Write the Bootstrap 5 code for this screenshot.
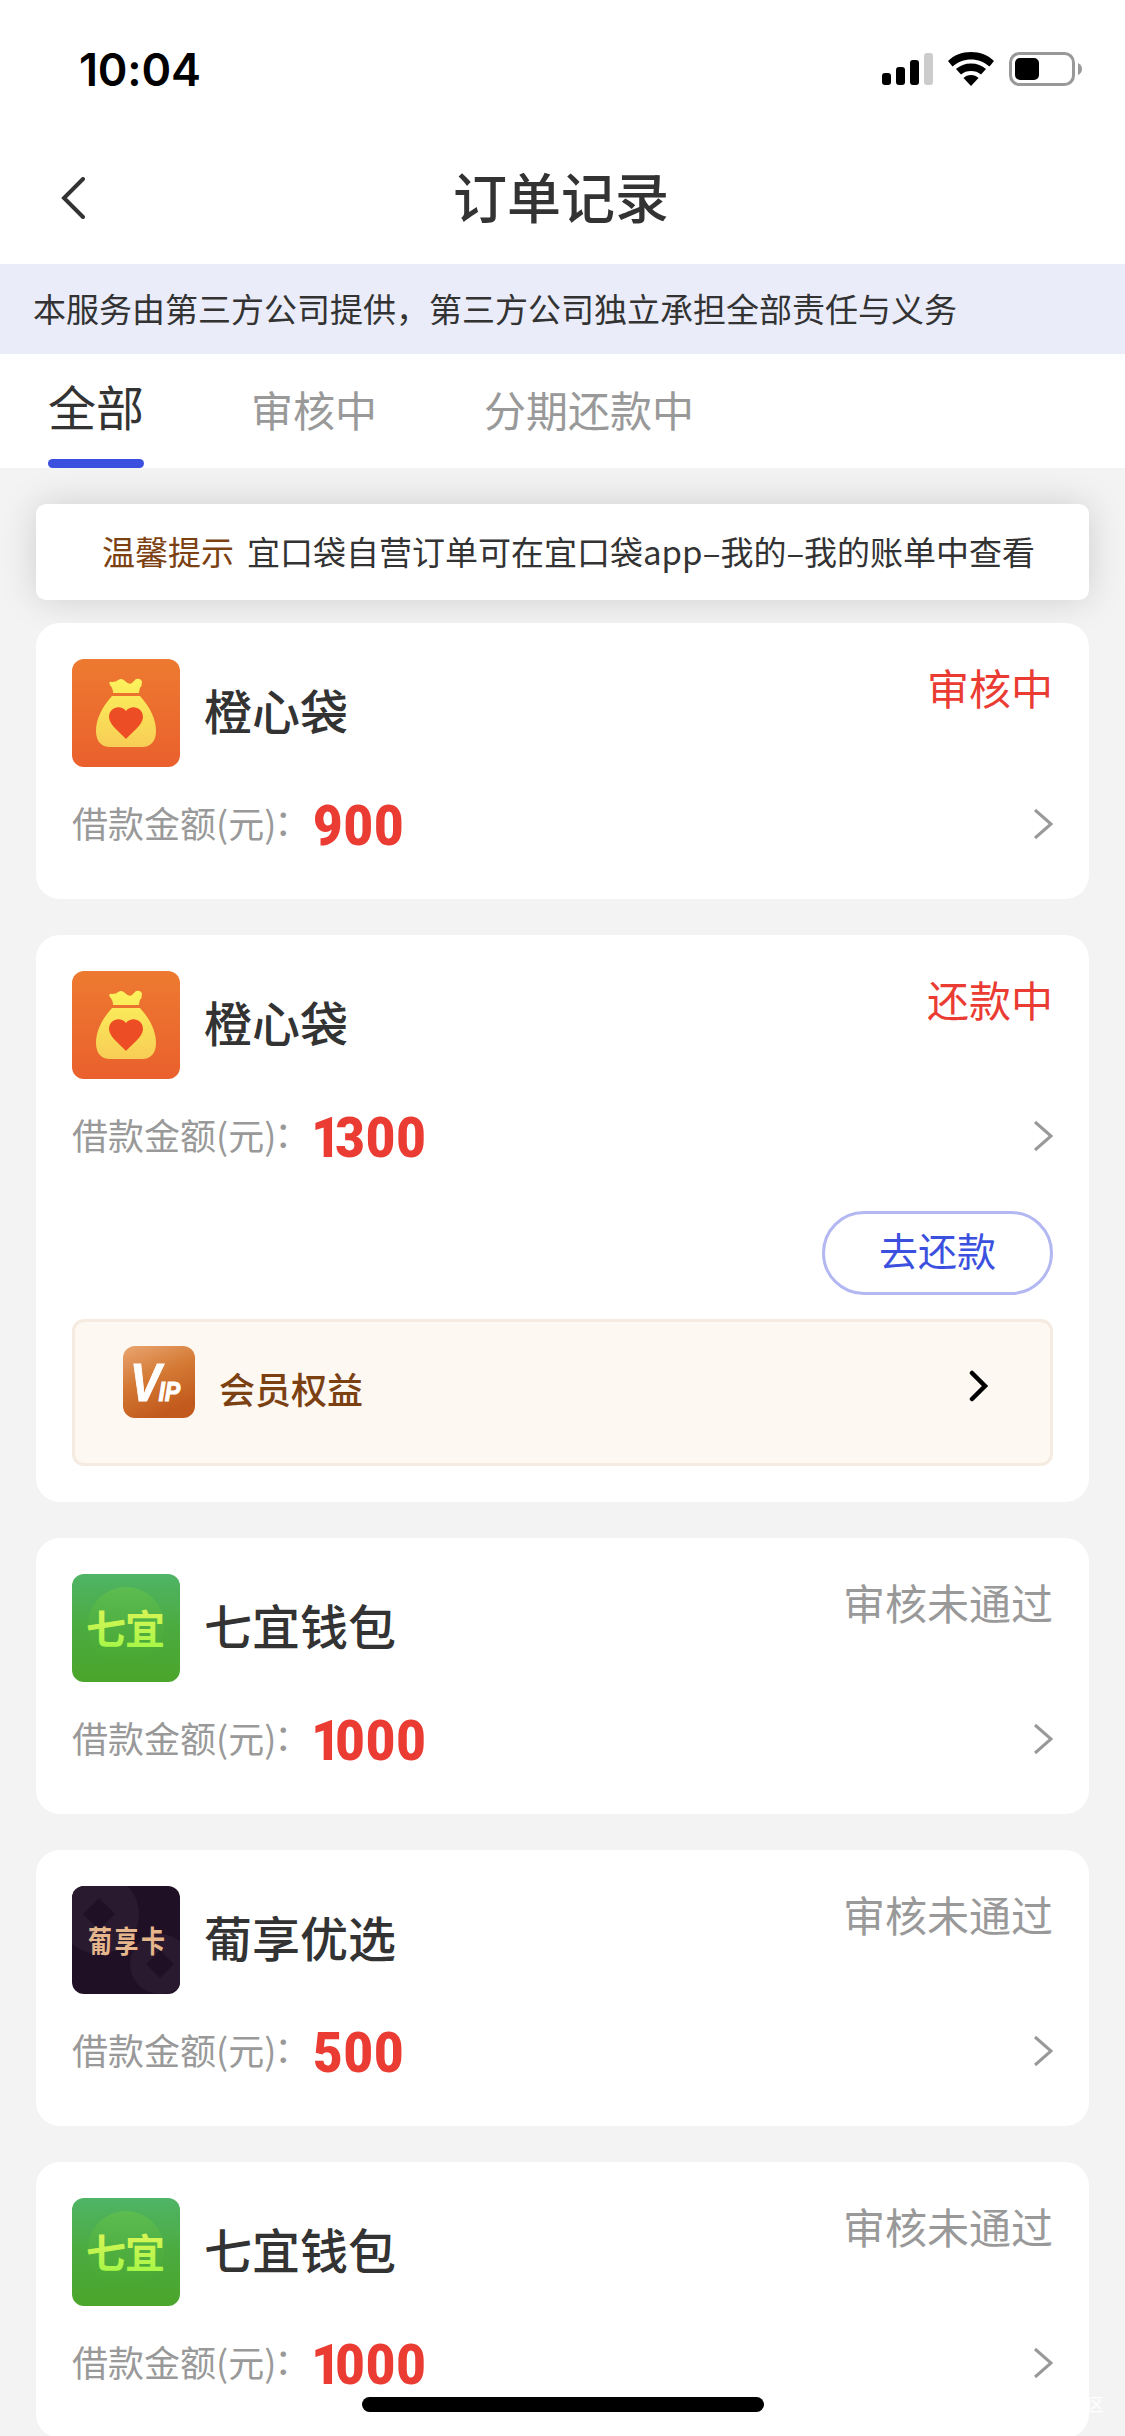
<!DOCTYPE html>
<html lang="zh-CN">
<head>
<meta charset="utf-8">
<meta name="viewport" content="width=device-width, initial-scale=1">
<title>订单记录</title>
<link href="https://cdn.jsdelivr.net/npm/bootstrap@5.3.0/dist/css/bootstrap.min.css" rel="stylesheet">
<style>
body{font-family:"Noto Sans CJK SC",sans-serif;background:#f3f3f3;color:#333;width:1125px;height:2436px;overflow:hidden;line-height:1}
svg{display:block;flex:none}
.status-bar{height:132px;padding:4px 41px 0 79px}
.clock{font:600 45px/1 Inter,sans-serif;color:#000;letter-spacing:-.2px;padding-top:2px}
.title-bar{height:132px;padding:0 64px 0 61px}
.page-title{font-size:54px;font-weight:500;line-height:1;padding-bottom:5px}
.notice{height:90px;background:#eaecf9;font-size:33px;padding:0 0 2px 33px}
.tabs{height:114px;padding-left:48px;gap:107px}
.tab-item{font-size:42px;color:#999;border-bottom:9px solid transparent;height:114px;padding-top:5px}
.tab-item.on{font-size:48px;color:#333;position:relative;padding:0 0 4px}
.tab-item.on::after{content:"";position:absolute;left:0;right:0;bottom:-9px;height:9px;border-radius:5px;background:#3c50e0}
.content{padding:36px 36px 0}
.tip{height:96px;border-radius:10px;box-shadow:0 0 36px rgba(0,0,0,.15);font-size:33px;padding:0 0 2px 66px;margin-bottom:23px;gap:13px;white-space:nowrap}
.tip-tag{color:#7c4112}
.order{border-radius:24px;padding:36px;margin-bottom:36px;position:relative}
.order-name{font-size:48px;font-weight:500;padding:0 0 8px 24px}
.state{font-size:42px;padding-top:7px;color:#999}
.state.live{color:#ea3c33}
.amount-row{height:114px;margin-bottom:-18px}
.amount-label{font-size:36px;color:#999;width:241px;white-space:nowrap;padding-bottom:4px}
.amount-label span{position:relative;left:-2px;top:-2px}
.amount{font:900 56px/1 Roboto,sans-serif;color:#ea3c33;letter-spacing:1px;padding-top:3px;transform:scaleX(.91);transform-origin:0 0}
.amount .one{letter-spacing:-6px;margin-left:-2px}
.pay{width:231px;height:84px;border:3px solid #b3b8f2;border-radius:42px;color:#3c50e0;font-size:39px;margin:36px 0 24px;padding:0 0 8px;line-height:1}
.vip{height:147px;border:3px solid #f6ebe0;border-radius:12px;background:#fdf8f1;padding:24px 61px 0 48px;color:#7c4112}
.vip-text{font-size:36px;font-weight:500;padding:24px 0 0 24px}
.vip-go{margin-top:24px}
.home-bar{position:absolute;left:362px;top:2397px;width:402px;height:15px;border-radius:8px;background:#000}
.corner{position:absolute;left:1087px;top:2395px;font-size:17px;color:#fff}
</style>
</head>
<body>
<svg width="0" height="0" class="position-absolute">
<defs>
<linearGradient id="orange" x2="0" y2="1"><stop stop-color="#ed7a30"/><stop offset="1" stop-color="#ea602d"/></linearGradient>
<linearGradient id="gold" x2="0" y2="1"><stop stop-color="#fcf35c"/><stop offset="1" stop-color="#f7cd55"/></linearGradient>
<linearGradient id="green" x2="0" y2="1"><stop stop-color="#4fb466"/><stop offset=".5" stop-color="#4bab3f"/><stop offset="1" stop-color="#4ba52b"/></linearGradient>
<linearGradient id="lime" x2="0" y2="1"><stop stop-color="#e8f45a"/><stop offset="1" stop-color="#9cf745"/></linearGradient>
<linearGradient id="disc" x2="0" y2="1"><stop stop-color="#5ebd50"/><stop offset="1" stop-color="#4baa32" stop-opacity="0"/></linearGradient>
<linearGradient id="bronze" x2=".4" y2="1"><stop stop-color="#eaa571"/><stop offset=".5" stop-color="#d47a35"/><stop offset="1" stop-color="#c25a1d"/></linearGradient>
<clipPath id="tile"><rect width="108" height="108" rx="12"/></clipPath>
<symbol id="bag" viewBox="0 0 108 108">
<rect width="108" height="108" rx="12" fill="url(#orange)"/>
<path fill="url(#gold)" d="M41 34Q41 29 38 26 36 22 40 23 44 23 47 20.500 50 19 53 22 57 26 60 24L64 20Q69 19 70 23 70 27 68 29 67 31 67 34ZM40 37H68C78 48 84 60 84 72 84 82 79 88 70 88H38C29 88 24 82 24 72 24 60 30 48 40 37Z"/>
<path fill="#ec4d24" d="M54 80C49 74 37 66 37 58 37 48 49 45 54 52 59 45 71 48 71 58 71 66 59 74 54 80Z"/>
</symbol>
<symbol id="qiyi" viewBox="0 0 108 108">
<rect width="108" height="108" rx="12" fill="url(#green)"/>
<circle cx="54" cy="51" r="38" fill="url(#disc)"/>
<text x="14" y="70" font-family="Noto Sans CJK SC" font-size="40" font-weight="700" textLength="79" fill="url(#lime)">七宜</text>
</symbol>
<symbol id="puxiang" viewBox="0 0 108 108">
<g clip-path="url(#tile)"><rect width="108" height="108" fill="#1f1026"/>
<path fill="#2a1a30" fill-rule="evenodd" d="M27-12a40 40 0 1 0 .1 0ZM27 12 43 28 27 44 11 28ZM88 48a30 30 0 1 0 .1 0ZM88 64 102 78 88 92 74 78Z"/></g>
<text transform="translate(16 66) scale(1 1.250)" font-family="Noto Sans CJK SC" font-size="24" font-weight="700" textLength="77" fill="#e5b68c">葡享卡</text>
</symbol>
<symbol id="go" viewBox="0 0 20 32"><path d="M2 2 18 16 2 30" fill="none" stroke="#999" stroke-width="3"/></symbol>
</defs>
</svg>

<header class="bg-white">
<div class="status-bar d-flex align-items-center justify-content-between">
<div class="clock">10:04</div>
<svg width="204" height="40" viewBox="0 0 204 40">
<g><rect x="2" y="25" width="9" height="12" rx="3"/><rect x="16" y="19" width="9" height="18" rx="3"/><rect x="30" y="12" width="9" height="25" rx="3"/><rect x="44" y="5" width="9" height="32" rx="3" fill="#ccc"/></g>
<path d="M91 4C100 4 108 7 114 13L109.500 18.500C104 14 98 11.500 91 11.500S78 14 72.500 18.500L68 13C74 7 82 4 91 4ZM91 15.500C97 15.500 102 17.500 106 21L101 26.500C98 24 95 23 91 23S84 24 81 26.500L76 21C80 17.500 85 15.500 91 15.500ZM91 27C94 27 96.500 28 98.500 30L91 38 83.500 30C85.500 28 88 27 91 27Z"/>
<rect x="130.500" y="5.500" width="63" height="31" rx="9" fill="none" stroke="#999" stroke-width="3"/><rect x="135" y="10" width="24" height="22" rx="5"/><path d="M198 15Q202 17 202 21T198 27Z" fill="#999"/>
</svg>
</div>
<div class="title-bar d-flex align-items-center justify-content-between">
<svg width="24" height="42" viewBox="0 0 24 42"><path d="M22 2 3 21 22 40" fill="none" stroke="#333" stroke-width="4" stroke-linecap="round"/></svg>
<h1 class="page-title m-0">订单记录</h1>
<span class="ps-4"></span>
</div>
</header>
<div class="notice d-flex align-items-center">本服务由第三方公司提供，第三方公司独立承担全部责任与义务</div>
<nav class="tabs d-flex bg-white">
<div class="tab-item on d-flex align-items-center">全部</div>
<div class="tab-item d-flex align-items-center">审核中</div>
<div class="tab-item d-flex align-items-center">分期还款中</div>
</nav>

<main class="content">
<div class="tip d-flex align-items-center bg-white"><span class="tip-tag">温馨提示</span><span>宜口袋自营订单可在宜口袋app–我的–我的账单中查看</span></div>

<section class="order bg-white">
<div class="d-flex"><svg width="108" height="108"><use href="#bag"/></svg><div class="order-name align-self-center flex-grow-1">橙心袋</div><div class="state live">审核中</div></div>
<div class="amount-row d-flex align-items-center"><span class="amount-label">借款金额(元)<span>：</span></span><span class="amount">900</span><svg class="ms-auto" width="20" height="32"><use href="#go"/></svg></div>
</section>

<section class="order bg-white">
<div class="d-flex"><svg width="108" height="108"><use href="#bag"/></svg><div class="order-name align-self-center flex-grow-1">橙心袋</div><div class="state live">还款中</div></div>
<div class="amount-row d-flex align-items-center"><span class="amount-label">借款金额(元)<span>：</span></span><span class="amount"><span class="one">1</span>300</span><svg class="ms-auto" width="20" height="32"><use href="#go"/></svg></div>
<div class="d-flex justify-content-end"><button class="btn pay">去还款</button></div>
<div class="vip d-flex align-items-start">
<svg width="72" height="72" viewBox="0 0 72 72"><rect width="72" height="72" rx="12" fill="url(#bronze)"/><text transform="translate(7 55) scale(.86 1)" fill="#fff" stroke="#fff" font-family="Liberation Sans" font-weight="700" font-style="italic" font-size="54">V<tspan font-size="27" dx="-3">IP</tspan></text></svg>
<span class="vip-text flex-grow-1">会员权益</span>
<svg class="vip-go" width="20" height="32" viewBox="0 0 20 32"><path d="M3 3 16 16 3 29" fill="none" stroke="#000" stroke-width="4.500" stroke-linecap="round"/></svg>
</div>
</section>

<section class="order bg-white">
<div class="d-flex"><svg width="108" height="108"><use href="#qiyi"/></svg><div class="order-name align-self-center flex-grow-1">七宜钱包</div><div class="state">审核未通过</div></div>
<div class="amount-row d-flex align-items-center"><span class="amount-label">借款金额(元)<span>：</span></span><span class="amount"><span class="one">1</span>000</span><svg class="ms-auto" width="20" height="32"><use href="#go"/></svg></div>
</section>

<section class="order bg-white">
<div class="d-flex"><svg width="108" height="108"><use href="#puxiang"/></svg><div class="order-name align-self-center flex-grow-1">葡享优选</div><div class="state">审核未通过</div></div>
<div class="amount-row d-flex align-items-center"><span class="amount-label">借款金额(元)<span>：</span></span><span class="amount">500</span><svg class="ms-auto" width="20" height="32"><use href="#go"/></svg></div>
</section>

<section class="order bg-white">
<div class="d-flex"><svg width="108" height="108"><use href="#qiyi"/></svg><div class="order-name align-self-center flex-grow-1">七宜钱包</div><div class="state">审核未通过</div></div>
<div class="amount-row d-flex align-items-center"><span class="amount-label">借款金额(元)<span>：</span></span><span class="amount"><span class="one">1</span>000</span><svg class="ms-auto" width="20" height="32"><use href="#go"/></svg></div>
</section>
</main>
<div class="home-bar"></div>
<div class="corner">区</div>
<script src="https://cdn.jsdelivr.net/npm/bootstrap@5.3.0/dist/js/bootstrap.bundle.min.js"></script>
</body>
</html>
